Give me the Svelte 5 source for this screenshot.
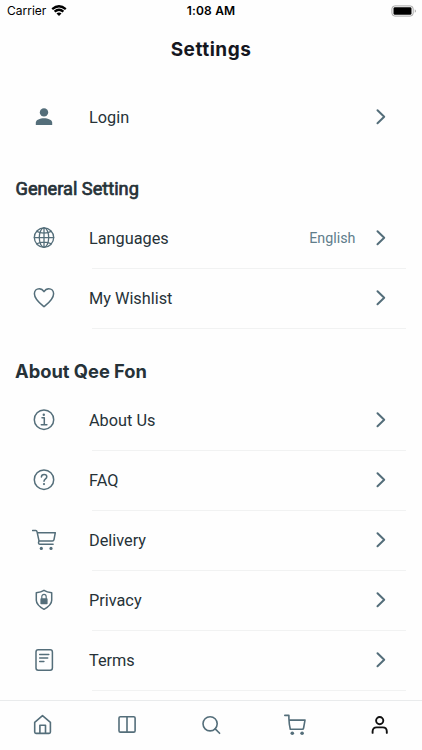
<script lang="ts">
  type Item = { icon: string; label: string; value?: string };

  const general: Item[] = [
    { icon: 'globe', label: 'Languages', value: 'English' },
    { icon: 'heart', label: 'My Wishlist' },
  ];

  const about: Item[] = [
    { icon: 'info', label: 'About Us' },
    { icon: 'help', label: 'FAQ' },
    { icon: 'delivery', label: 'Delivery' },
    { icon: 'privacy', label: 'Privacy' },
    { icon: 'terms', label: 'Terms' },
  ];

  const tabs = ['home', 'categories', 'search', 'cart', 'profile'];
  let active = $state('profile');
</script>

{#snippet icon(name: string)}
  <svg class="icon" viewBox="0 0 24 24" aria-hidden="true">
    {#if name === 'user'}
      <g class="solid">
        <circle cx="12" cy="7.4" r="4.2" />
        <path d="M3.8 20v-2.2c0-2.8 4.2-4.5 8.2-4.5s8.2 1.7 8.2 4.5V20z" />
      </g>
    {:else if name === 'globe'}
      <g stroke-width="1.3">
        <circle cx="12" cy="11.6" r="9.7" />
        <ellipse cx="12" cy="11.6" rx="4.7" ry="9.7" />
        <path d="M12 1.9v19.4M2.3 11.6h19.4M4.8 5.4c4 2.2 10.4 2.2 14.4 0M4.8 17.8c4-2.2 10.4-2.2 14.4 0" />
      </g>
    {:else if name === 'heart'}
      <path d="M12 20.7C9.8 18.9 2.4 13.6 2.4 7.8c0-3 2.2-5.1 4.8-5.1 2.1 0 3.7 1.1 4.8 3 1.1-1.9 2.7-3 4.8-3 2.6 0 4.8 2.1 4.8 5.1 0 5.8-7.4 11.1-9.6 12.9z" />
    {:else if name === 'info'}
      <circle cx="12" cy="11.7" r="9.7" />
      <path d="M10 9.8h2.3v6.7M9.3 16.7h5.6" />
      <circle class="solid" cx="11.8" cy="6.7" r="1.2" />
    {:else if name === 'help'}
      <circle cx="12" cy="11.7" r="9.7" />
      <path d="M9.4 9c.1-1.7 1.2-2.5 2.7-2.5 1.6 0 2.7.9 2.7 2.2 0 2.2-2.8 2-2.8 4.500" />
      <circle class="solid" cx="12" cy="16.1" r="1.1" />
    {:else if name === 'delivery'}
      <path d="M.6 2.6h3.2c.8 0 1 .3 1.2 1.1l1.8 8.2c.2 1 .2 1.2-.1 2-.4 1.2 0 2.4 1.2 2.4h13.2M5.2 4.7h18.100L22 11.600c-.2.900-.7 1.300-1.600 1.300H7" />
      <circle class="solid" cx="9.3" cy="20.4" r="1.6" />
      <circle class="solid" cx="19" cy="20.4" r="1.6" />
    {:else if name === 'privacy'}
      <path d="M12 2.3c-2.300 1.500-4.900 2.100-7.700 2.500v7.500c0 4 3.100 6.500 7.700 9 4.600-2.500 7.700-5 7.700-9V4.800c-2.800-.4-5.400-1-7.700-2.500z" />
      <rect class="solid" x="8.4" y="10.2" width="7.2" height="6" rx=".8" />
      <path d="M9.8 10.5V8.8c0-3.2 4.4-3.2 4.4 0v1.7" stroke-width="1.2" />
    {:else if name === 'terms'}
      <rect x="4" y="1.7" width="16.4" height="20.6" rx="2.2" />
      <path d="M7.7 6.6h9.1M7.7 10.1h8M7.7 13.6h4.2" />
    {:else if name === 'home'}
      <path d="M4.7 9.3L12.5 2.7l7.9 6.6v9.8q0 1.3-1.3 1.3H6q-1.3 0-1.3-1.3zM9.9 20.4v-8.2h5.6v8.2" stroke-width="1.6" />
    {:else if name === 'categories'}
      <path d="M5.4 3.7h13.3q1.4 0 1.4 1.4v12.6q0 1.4-1.4 1.4H5.4Q4 19.1 4 17.7V5.1q0-1.4 1.4-1.4zM12 3.7v15.4" stroke-width="1.6" />
    {:else if name === 'search'}
      <circle cx="11.1" cy="10.8" r="7.1" stroke-width="1.6" />
      <path d="M16.2 15.9l4.4 4.4" stroke-width="1.6" />
    {:else if name === 'cart'}
      <path d="M1.8 2.4h4.1v3.2q.1 5.3 1.4 10.6h11.9q1.200 0 1.400-1.200L22 7.100H6.200" stroke-width="1.6" />
      <circle class="solid" cx="9.3" cy="20.2" r="1.8" />
      <circle class="solid" cx="19.1" cy="20.2" r="1.8" />
    {:else if name === 'profile'}
      <circle cx="11.7" cy="7.6" r="3.6" stroke-width="1.9" />
      <path d="M4.6 19.9v-1.3c0-3 1.5-4.2 4-4.2h6.2c2.5 0 4 1.2 4 4.2v1.3" stroke-width="1.9" />
    {/if}
  </svg>
{/snippet}

{#snippet row(item: Item)}
  <li class="row">
    {@render icon(item.icon)}
    <span class="label">{item.label}</span>
    {#if item.value}
      <span class="value">{item.value}</span>
    {/if}
    <svg class="chevron" viewBox="0 0 10 18" aria-hidden="true">
      <path d="M1.5 2.2l6.700 6.500-6.700 6.500" />
    </svg>
  </li>
{/snippet}

<div class="screen">
  <div class="status">
    <div class="carrier">
      <span>Carrier</span>
      <svg class="wifi" viewBox="0 0 16 12" aria-hidden="true">
        <path d="M1.2 4.2q6.8-5.8 13.6 0M3.6 6.7q4.4-3.8 8.8 0" />
        <path class="dot" d="M5.5 8.5q2.5-2 5 0L8 11z" />
      </svg>
    </div>
    <span class="time">1:08 AM</span>
    <svg class="battery" viewBox="0 0 26 12" aria-hidden="true">
      <rect class="shell" x=".9" y=".9" width="21.3" height="10.2" rx="3" />
      <rect x="2.5" y="2.3" width="18" height="7.4" rx="1.3" />
      <path class="cap" d="M23.8 4.2q2 1.8 0 3.6z" />
    </svg>
  </div>

  <h1>Settings</h1>

  <main>
    <ul>
      {@render row({ icon: 'user', label: 'Login' })}
    </ul>

    <h2 class="general">General Setting</h2>
    <ul class="divided">
      {#each general as item}
        {@render row(item)}
      {/each}
    </ul>

    <h2 class="about">About Qee Fon</h2>
    <ul class="divided">
      {#each about as item}
        {@render row(item)}
      {/each}
    </ul>
  </main>

  <nav>
    {#each tabs as tab}
      <button class:active={active === tab} aria-label={tab} onclick={() => (active = tab)}>
        {@render icon(tab)}
      </button>
    {/each}
  </nav>
</div>

<style>
  :global(body) {
    margin: 0;
    background: #fff;
  }

  .screen {
    display: flex;
    flex-direction: column;
    height: 750px;
    overflow: hidden;
    background: #fefefe;
    color: #263238;
    font-family: Roboto, sans-serif;
  }

  .status {
    display: grid;
    grid-template-columns: 1fr auto 1fr;
    align-items: center;
    box-sizing: border-box;
    height: 22px;
    padding: 0 5px 1px 7px;
    color: #000;
    font-family: Inter, sans-serif;
    font-size: 12px;
    flex-shrink: 0;
  }

  .carrier {
    display: flex;
    align-items: center;
    gap: 5px;
  }

  .time {
    padding-right: 2px;
    font-weight: 600;
    letter-spacing: 0.2px;
  }

  .wifi {
    width: 16px;
    height: 12px;
    fill: none;
    stroke: #000;
    stroke-width: 2.3;
  }

  .wifi .dot {
    fill: #000;
    stroke: none;
  }

  .battery {
    width: 26px;
    height: 12px;
    justify-self: end;
  }

  .shell {
    fill: none;
    stroke: #a8a8a8;
  }

  .cap {
    fill: #999;
  }

  h1 {
    height: 54px;
    margin: 0;
    color: #15171f;
    font: 700 19px/55px Inter, sans-serif;
    letter-spacing: 0.5px;
    text-align: center;
    flex-shrink: 0;
  }

  main {
    flex: 1;
    min-height: 0;
    padding-top: 12px;
    overflow: hidden;
  }

  ul {
    margin: 0;
    padding: 0;
    list-style: none;
  }

  .row {
    display: flex;
    align-items: center;
    box-sizing: border-box;
    height: 60px;
    padding: 0 36px 2px 32px;
  }

  .divided .row {
    background: linear-gradient(#f1f2f2, #f1f2f2) 92px 100% / 314px 1px no-repeat;
  }

  .icon {
    display: block;
    width: 24px;
    height: 24px;
    fill: none;
    stroke: #546e7a;
    stroke-width: 1.5;
    stroke-linecap: round;
    stroke-linejoin: round;
    flex-shrink: 0;
  }

  .icon .solid {
    fill: #546e7a;
    stroke: none;
  }

  .label {
    flex: 1;
    margin-left: 33px;
    padding-top: 2px;
    font-size: 16.3px;
    line-height: 20px;
  }

  .value {
    margin-right: 20.5px;
    color: #607d8b;
    font-size: 14.3px;
  }

  .chevron {
    width: 10px;
    height: 18px;
    fill: none;
    stroke: #546e7a;
    stroke-width: 2;
    stroke-linecap: round;
    stroke-linejoin: round;
  }

  h2 {
    margin: 0;
    padding-left: 15px;
  }

  .general {
    height: 61px;
    padding-left: 15.5px;
    font-size: 18.2px;
    font-weight: 400;
    line-height: 81px;
    -webkit-text-stroke: 0.7px #263238;
  }

  .about {
    height: 62px;
    font: 700 18.3px/84px Inter, sans-serif;
  }

  nav {
    display: grid;
    grid-template-columns: repeat(5, 1fr);
    box-sizing: border-box;
    height: 50px;
    border-top: 1px solid #e9ebec;
    background: #fefefe;
    flex-shrink: 0;
  }

  button {
    display: flex;
    justify-content: center;
    padding: 12px 0 0;
    border: 0;
    background: none;
  }

  .active .icon {
    stroke: #111;
  }
</style>
